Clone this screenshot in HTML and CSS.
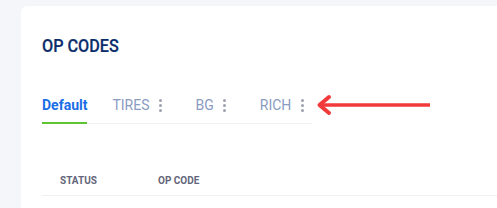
FILE: index.html
```html
<!DOCTYPE html>
<html>
<head>
<meta charset="utf-8">
<link rel="stylesheet" href="styles.css">
</head>
<body>
<div class="card">
  <h1 class="title">OP CODES</h1>
  <div class="tabs">
    <div class="tab active"><span class="tab-label">Default</span></div>
    <div class="tab"><span class="tab-label">TIRES</span><span class="kebab"><i></i><i></i><i></i></span></div>
    <div class="tab"><span class="tab-label">BG</span><span class="kebab"><i></i><i></i><i></i></span></div>
    <div class="tab"><span class="tab-label">RICH</span><span class="kebab"><i></i><i></i><i></i></span></div>
  </div>
  <div class="table-head">
    <div class="th th-status">STATUS</div>
    <div class="th th-code">OP CODE</div>
  </div>
  <svg class="arrow" width="120" height="22" viewBox="0 0 120 22">
    <line x1="5" y1="11" x2="115" y2="11" stroke="#f23a3a" stroke-width="3.6" stroke-linecap="butt"/>
    <polyline points="14,3 4.5,11 14,19" fill="none" stroke="#f23a3a" stroke-width="4" stroke-linecap="round" stroke-linejoin="round"/>
  </svg>
</div>
</body>
</html>
```

FILE: styles.css
```css
html, body {
  margin: 0;
  padding: 0;
  background: #f4f6fa;
  font-family: Roboto, "Liberation Sans", sans-serif;
}
.card {
  position: relative;
  margin: 6px 0 0 21px;
  background: #ffffff;
  border-radius: 6px 0 0 0;
  padding: 29px 0 20px 21px;
  min-height: 180px;
  box-sizing: border-box;
}
.title {
  display: inline-block;
  margin: 0;
  font-size: 18px;
  line-height: 21px;
  font-weight: 500;
  color: #0c2d6b;
  transform: scaleX(0.9);
  transform-origin: left center;
  -webkit-text-stroke: 0.2px #0c2d6b;
}
.tabs {
  display: flex;
  width: max-content;
  gap: 25px;
  margin-top: 41px;
  border-bottom: 1px solid #eef0f4;
}
.tab {
  display: flex;
  align-items: flex-start;
  padding-bottom: 9px;
  border-bottom: 2px solid transparent;
  margin-bottom: -1px;
}
.tab-label {
  font-size: 14px;
  line-height: 16px;
  color: #8a9bc1;
}
.tab.active {
  border-bottom-color: #5cc531;
}
.tab.active .tab-label {
  color: #1a6ee6;
  font-weight: 700;
}
.kebab {
  width: 20px;
  height: 16px;
  display: flex;
  flex-direction: column;
  align-items: center;
  justify-content: center;
  gap: 2px;
  margin-left: 1px;
}
.kebab i {
  display: block;
  width: 3px;
  height: 3px;
  border-radius: 50%;
  background: #9ca1ad;
}
.table-head {
  display: flex;
  margin-top: 51px;
  border-bottom: 1px solid #eef0f3;
  padding-bottom: 8px;
}
.th {
  font-size: 10px;
  line-height: 12px;
  font-weight: 700;
  color: #63667a;
  padding-left: 18px;
}
.th-status {
  width: 80px;
}
.arrow {
  position: absolute;
  left: 294px;
  top: 88px;
}
```
